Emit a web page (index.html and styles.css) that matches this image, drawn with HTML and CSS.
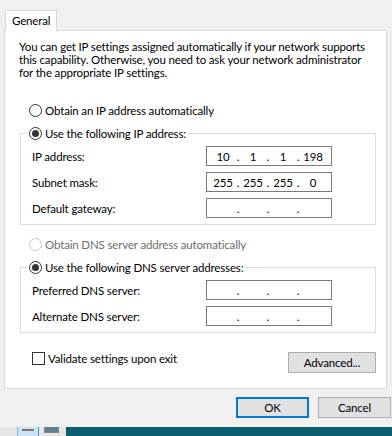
FILE: index.html
```html
<!DOCTYPE html>
<html lang="en">
<head>
  <meta charset="UTF-8">
  <title>Internet Protocol Version 4 (TCP/IPv4) Properties</title>
  <link rel="stylesheet" href="styles.css">
</head>
<body>
  <div class="dialog">
    <div class="tabs">
      <div class="tab">General</div>
    </div>

    <div class="panel">
      <p class="intro">You can get IP settings assigned automatically if your network supports<br>this capability. Otherwise, you need to ask your network administrator<br>for the appropriate IP settings.</p>

      <label class="radio-row">
        <span class="radio"></span>
        <span>Obtain an IP address automatically</span>
      </label>

      <fieldset class="group">
        <legend>
          <label class="radio-row">
            <span class="radio checked"></span>
            <span>Use the following IP address:</span>
          </label>
        </legend>
        <div class="field">
          <span class="field-label">IP address:</span>
          <div class="ip-box">
            <span class="seg">10</span><span class="dot">.</span><span class="seg">1</span><span class="dot">.</span><span class="seg">1</span><span class="dot">.</span><span class="seg">198</span>
          </div>
        </div>
        <div class="field">
          <span class="field-label">Subnet mask:</span>
          <div class="ip-box">
            <span class="seg">255</span><span class="dot">.</span><span class="seg">255</span><span class="dot">.</span><span class="seg">255</span><span class="dot">.</span><span class="seg">0</span>
          </div>
        </div>
        <div class="field">
          <span class="field-label">Default gateway:</span>
          <div class="ip-box">
            <span class="seg"></span><span class="dot">.</span><span class="seg"></span><span class="dot">.</span><span class="seg"></span><span class="dot">.</span><span class="seg"></span>
          </div>
        </div>
      </fieldset>

      <label class="radio-row disabled">
        <span class="radio"></span>
        <span>Obtain DNS server address automatically</span>
      </label>

      <fieldset class="group">
        <legend>
          <label class="radio-row">
            <span class="radio checked"></span>
            <span>Use the following DNS server addresses:</span>
          </label>
        </legend>
        <div class="field">
          <span class="field-label">Preferred DNS server:</span>
          <div class="ip-box">
            <span class="seg"></span><span class="dot">.</span><span class="seg"></span><span class="dot">.</span><span class="seg"></span><span class="dot">.</span><span class="seg"></span>
          </div>
        </div>
        <div class="field">
          <span class="field-label">Alternate DNS server:</span>
          <div class="ip-box">
            <span class="seg"></span><span class="dot">.</span><span class="seg"></span><span class="dot">.</span><span class="seg"></span><span class="dot">.</span><span class="seg"></span>
          </div>
        </div>
      </fieldset>

      <div class="bottom-row">
        <label class="check-row">
          <span class="checkbox"></span>
          <span>Validate settings upon exit</span>
        </label>
        <button class="btn advanced">Advanced...</button>
      </div>
    </div>

    <div class="buttons">
      <button class="btn ok">OK</button>
      <button class="btn">Cancel</button>
    </div>
  </div>

  <div class="taskbar">
    <div class="task-left"></div>
    <div class="task-item active">
      <span class="ico-list"></span>
    </div>
    <div class="task-item">
      <span class="ico-screen"></span>
    </div>
    <div class="task-rest"></div>
  </div>
</body>
</html>
```

FILE: styles.css
```css
html, body {
  margin: 0;
  padding: 0;
}

body {
  font-family: Lato, "Liberation Sans", sans-serif;
  font-size: 11.5px;
  letter-spacing: -0.15px;
  color: #000;
  background: #f0f0f0;
  width: 392px;
  height: 436px;
  overflow: hidden;
}

.dialog {
  height: 427px;
  padding: 10px 4px 0 4px;
  box-sizing: border-box;
}

.tabs {
  display: flex;
  padding-left: 1px;
  height: 20px;
  position: relative;
  z-index: 1;
}

.tab {
  width: 52px;
  height: 21px;
  box-sizing: border-box;
  background: #fff;
  border: 1px solid #d9d9d9;
  border-bottom: none;
  padding: 3px 0 0 6px;
  line-height: 14px;
}

.panel {
  width: 383px;
  height: 359px;
  box-sizing: border-box;
  background: #fff;
  border: 1px solid #d9d9d9;
  padding: 9px 10px 0 15px;
}

.intro {
  margin: 0 0 0 -1px;
  line-height: 13px;
  white-space: nowrap;
}

.radio-row, .check-row {
  display: flex;
  align-items: center;
  height: 16px;
  gap: 3px;
  white-space: nowrap;
}

.panel > .radio-row {
  margin-left: 9px;
}

.panel > .radio-row:first-of-type {
  margin-top: 23px;
}

.radio {
  width: 13px;
  height: 13px;
  box-sizing: border-box;
  border: 1px solid #333;
  border-radius: 50%;
  background: #fff;
  position: relative;
}

.radio.checked::after {
  content: "";
  position: absolute;
  left: 2px;
  top: 2px;
  width: 7px;
  height: 7px;
  border-radius: 50%;
  background: #333;
}

.disabled {
  color: #6d6d6d;
}

.disabled .radio {
  border-color: #c4c4c4;
}

.group {
  margin: 6px 0 0 0;
  padding: 0 0 6px 11px;
  border: 1px solid #dcdcdc;
  min-width: 0;
}

.group legend {
  margin-left: -5px;
  padding: 0 2px;
}

.group + .radio-row {
  margin-top: 11px;
}

.radio-row + .group {
  margin-top: 7px;
}

.field {
  display: flex;
  align-items: center;
  height: 20px;
  margin-top: 6px;
}

.field:first-of-type {
  margin-top: 5px;
}

.field-label {
  width: 174px;
}

.ip-box {
  width: 126px;
  height: 20px;
  box-sizing: border-box;
  border: 1px solid #7a7a7a;
  display: flex;
  align-items: center;
  padding-left: 4px;
}

.seg {
  width: 24px;
  text-align: center;
}

.dot {
  width: 6px;
  text-align: center;
}

.bottom-row {
  display: flex;
  justify-content: space-between;
  align-items: flex-start;
  margin-top: 18px;
  padding-left: 12px;
}

.check-row {
  margin-top: -1px;
}

.checkbox {
  width: 13px;
  height: 13px;
  box-sizing: border-box;
  border: 1px solid #333;
  background: #fff;
}

.btn {
  font-family: inherit;
  font-size: 11.5px;
  letter-spacing: -0.15px;
  color: #000;
  background: #e1e1e1;
  border: 1px solid #adadad;
  height: 21px;
  padding: 0;
  margin: 0;
}

.advanced {
  width: 88px;
  margin-top: 1px;
}

.buttons {
  display: flex;
  justify-content: flex-end;
  gap: 9px;
  margin-top: 8px;
  margin-right: -3px;
}

.buttons .btn {
  width: 73px;
}

.btn.ok {
  border: 2px solid #0078d7;
}

.taskbar {
  display: flex;
  height: 9px;
  background: #e6e6e6;
}

.task-left {
  width: 17px;
}

.task-item {
  width: 22px;
  position: relative;
}

.task-item.active {
  background: #cde3f3;
  border-left: 1px solid #7fb8e5;
  border-right: 1px solid #3d98db;
  box-sizing: border-box;
}

.ico-list {
  position: absolute;
  left: 4px;
  top: 2px;
  width: 12px;
  height: 7px;
  border-top: 2px dashed #777;
}

.ico-screen {
  position: absolute;
  left: 5px;
  top: 0;
  width: 13px;
  height: 5px;
  border: 1px solid #888;
  border-top: none;
  background: #5f7d8e;
}

.task-rest {
  flex: 1;
  margin-left: 5px;
  background: #0b5e70;
}
```
